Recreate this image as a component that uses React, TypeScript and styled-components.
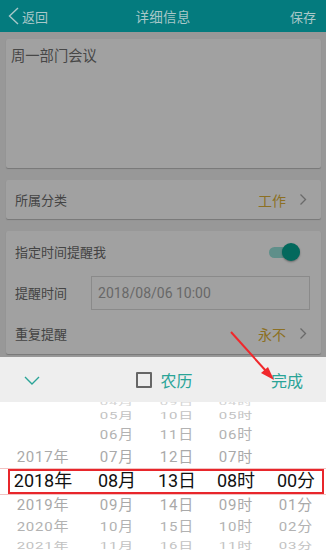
import React from 'react';
import styled, { createGlobalStyle } from 'styled-components';

const GlobalStyle = createGlobalStyle`
  html, body {
    margin: 0;
    padding: 0;
  }
  body {
    font-family: Roboto, "Noto Sans", "Noto Sans CJK SC", sans-serif;
  }
`;

const Screen = styled.div`
  position: relative;
  width: 326px;
  height: 554px;
  overflow: hidden;
  background: #989898;
`;

const Header = styled.div`
  display: grid;
  grid-template-columns: 1fr auto 1fr;
  align-items: center;
  height: 32px;
  background: #047b7e;
  color: #a9c8c9;
  font-size: 13px;
`;

const BackButton = styled.div`
  display: flex;
  align-items: center;
  gap: 3px;
  padding-left: 8px;
  justify-self: start;
`;

const HeaderTitle = styled.div`
  font-size: 13.5px;
  letter-spacing: 0.2px;
`;

const SaveButton = styled.div`
  justify-self: end;
  padding-right: 10px;
`;

const Body = styled.div`
  display: flex;
  flex-direction: column;
  padding: 7px 5px 0 6px;
  gap: 12px;
`;

const Card = styled.div<{ $height?: number }>`
  background: #a1a1a1;
  border-radius: 2px;
  box-shadow: 0 1px 1px rgba(0, 0, 0, 0.22);
  ${p => (p.$height ? `height: ${p.$height}px;` : '')}
`;

const Note = styled(Card)`
  padding: 9px 5px;
  box-sizing: border-box;
  color: #474747;
  font-size: 14.3px;
  line-height: 16px;
`;

const Row = styled.div<{ $h?: number }>`
  display: flex;
  align-items: center;
  height: ${p => p.$h ?? 41}px;
  padding: 0 14px 0 9px;
  font-size: 13px;
  color: #444444;
`;

const Label = styled.div<{ $fixed?: boolean }>`
  flex: ${p => (p.$fixed ? 'none' : '1')};
`;

const Value = styled.div`
  color: #8c7023;
  font-size: 14px;
  margin-right: 13px;
`;

const Toggle = styled.div`
  position: relative;
  width: 31px;
  height: 18px;
  margin-right: 7px;
`;

const Track = styled.div`
  position: absolute;
  left: 0;
  top: 4px;
  width: 28px;
  height: 11px;
  border-radius: 6px;
  background: #5f8f8a;
`;

const Knob = styled.div`
  position: absolute;
  right: 0;
  top: 0;
  width: 18px;
  height: 18px;
  border-radius: 50%;
  background: #03695d;
  box-shadow: 0 1px 2px rgba(0, 0, 0, 0.35);
`;

const TimeInput = styled.div`
  display: flex;
  align-items: center;
  margin-left: 24px;
  flex: 1;
  height: 34px;
  box-sizing: border-box;
  border: 1px solid #8a8a8a;
  margin-right: -3px;
  padding-left: 6px;
  font-size: 14px;
  color: #686868;
`;

const Sheet = styled.div`
  position: absolute;
  left: 0;
  right: 0;
  bottom: 0;
  height: 197px;
  display: flex;
  flex-direction: column;
  background: #ffffff;
`;

const SheetBar = styled.div`
  display: grid;
  grid-template-columns: 1fr auto 1fr;
  align-items: center;
  height: 45px;
  padding: 0 23px 0 24px;
  background: #eeeeee;
  color: #2aa497;
  font-size: 16px;
`;

const Collapse = styled.div`
  justify-self: start;
  display: flex;
  margin-top: 2px;
`;

const Lunar = styled.div`
  display: flex;
  align-items: center;
  gap: 8px;
  margin-left: 2px;
`;

const CheckBox = styled.div`
  width: 16px;
  height: 16px;
  box-sizing: border-box;
  border: 2px solid #666666;
  border-radius: 1px;
`;

const Done = styled.div`
  justify-self: end;
`;

const Wheel = styled.div`
  position: relative;
  flex: 1;
  overflow: hidden;
  display: grid;
  grid-template-columns: 86px 62px 58px 60px 60px;
  align-content: start;
  &::before {
    content: '';
    position: absolute;
    left: 0;
    right: 0;
    top: 66px;
    height: 25px;
    border-top: 1px solid #f3c2c2;
    border-bottom: 1px solid #f3c2c2;
  }
`;

const Column = styled.div`
  display: flex;
  flex-direction: column;
  margin-top: -4px;
`;

const levels = [
  { h: 26, size: 18, color: '#111111', scale: 1, spacing: 0 },
  { h: 22, size: 15, color: '#a9a9a9', scale: 1, spacing: 0.8 },
  { h: 22, size: 15, color: '#b2b2b2', scale: 0.88, spacing: 0.8 },
  { h: 16, size: 15, color: '#c2c2c2', scale: 0.62, spacing: 0.8 },
  { h: 10, size: 15, color: '#d4d4d4', scale: 0.42, spacing: 0.8 },
];

const Item = styled.div<{ $level: number }>`
  height: ${p => levels[p.$level].h}px;
  line-height: ${p => levels[p.$level].h}px;
  text-align: center;
  white-space: nowrap;
  font-size: ${p => levels[p.$level].size}px;
  color: ${p => levels[p.$level].color};
  letter-spacing: ${p => levels[p.$level].spacing}px;
  transform: scaleY(${p => levels[p.$level].scale});
`;

const Frame = styled.div`
  position: absolute;
  left: 8px;
  top: 469px;
  width: 316px;
  height: 25px;
  box-sizing: border-box;
  border: 2px solid #e8262b;
  pointer-events: none;
`;

const Arrow = styled.svg`
  position: absolute;
  left: 0;
  top: 0;
  pointer-events: none;
`;

const seq = (start: number, suffix: string) =>
  Array.from({ length: 9 }, (_, i) => String(start + i).padStart(2, '0') + suffix);

const columns: (string | null)[][] = [
  [null, null, null, '2017年', '2018年', '2019年', '2020年', '2021年', '2022年'],
  seq(4, '月'),
  seq(9, '日'),
  seq(4, '时'),
  [null, null, null, null, '00分', '01分', '02分', '03分', '04分'],
];

const Chevron = () => (
  <svg width="8" height="13" viewBox="0 0 8 13">
    <polyline points="1.5,1.5 6.5,6.5 1.5,11.5" fill="none" stroke="#6a6a6a" strokeWidth="1.3" />
  </svg>
);

export default function App() {
  return (
    <>
      <GlobalStyle />
      <Screen>
        <Header>
          <BackButton>
            <svg width="11" height="18" viewBox="0 0 11 18">
              <polyline points="10,1 1.5,9 10,17" fill="none" stroke="#a9c8c9" strokeWidth="1.4" />
            </svg>
            <span>返回</span>
          </BackButton>
          <HeaderTitle>详细信息</HeaderTitle>
          <SaveButton>保存</SaveButton>
        </Header>
        <Body>
          <Note $height={129}>周一部门会议</Note>
          <Card>
            <Row $h={39}>
              <Label>所属分类</Label>
              <Value>工作</Value>
              <Chevron />
            </Row>
          </Card>
          <Card>
            <Row>
              <Label>指定时间提醒我</Label>
              <Toggle>
                <Track />
                <Knob />
              </Toggle>
            </Row>
            <Row>
              <Label $fixed>提醒时间</Label>
              <TimeInput>2018/08/06 10:00</TimeInput>
            </Row>
            <Row>
              <Label>重复提醒</Label>
              <Value>永不</Value>
              <Chevron />
            </Row>
          </Card>
        </Body>
        <Sheet>
          <SheetBar>
            <Collapse>
              <svg width="16" height="9" viewBox="0 0 16 9">
                <polyline points="1,1 8,8 15,1" fill="none" stroke="#2aa497" strokeWidth="1.4" />
              </svg>
            </Collapse>
            <Lunar>
              <CheckBox />
              <span>农历</span>
            </Lunar>
            <Done>完成</Done>
          </SheetBar>
          <Wheel>
            {columns.map((items, c) => (
              <Column key={c}>
                {items.map((text, i) => (
                  <Item key={i} $level={Math.abs(i - 4)}>
                    {text ?? ''}
                  </Item>
                ))}
              </Column>
            ))}
          </Wheel>
        </Sheet>
        <Frame />
        <Arrow width="326" height="554" viewBox="0 0 326 554">
          <line x1="231" y1="332" x2="266" y2="371" stroke="#f0282c" strokeWidth="2" />
          <polygon points="274,380 261,373 268,367" fill="#f0282c" />
        </Arrow>
      </Screen>
    </>
  );
}
